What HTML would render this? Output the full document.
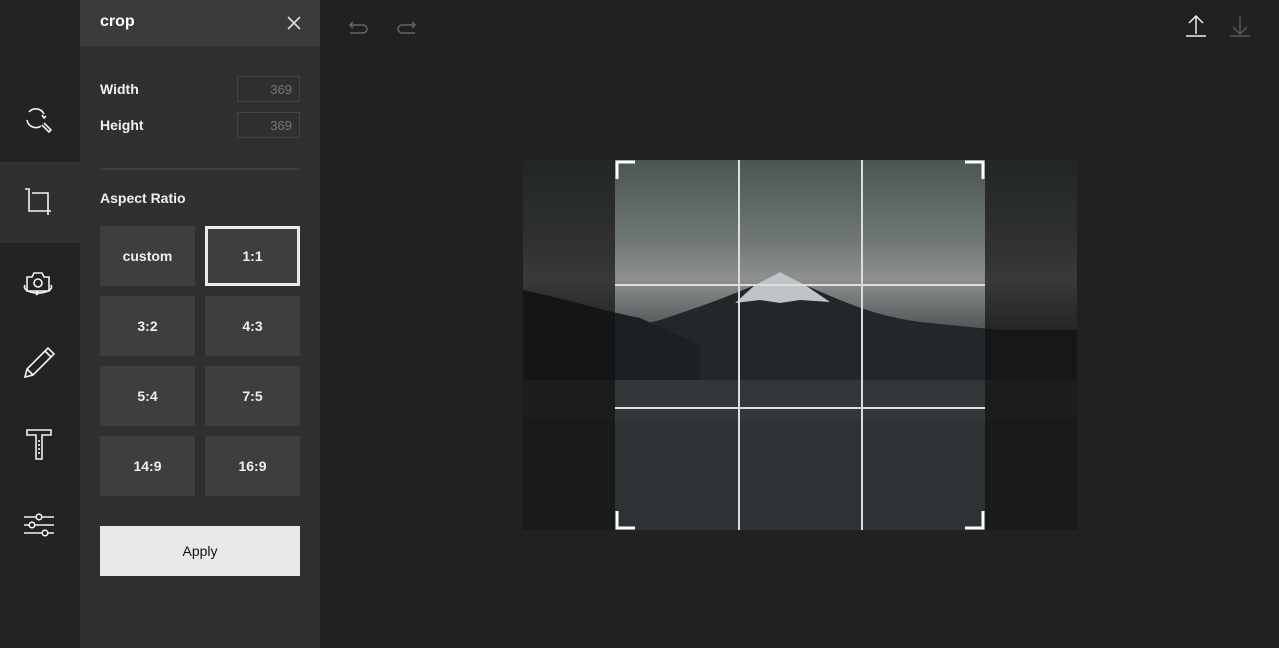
<!DOCTYPE html>
<html><head><style>
*{margin:0;padding:0;box-sizing:border-box}
body{width:1279px;height:648px;background:#212121;font-family:"Liberation Sans",sans-serif;position:relative;overflow:hidden;color:#eee}
.side{position:absolute;left:0;top:0;width:80px;height:648px;background:#232323}
.tab{position:absolute;left:0;width:80px;height:81px}
.panel{position:absolute;left:80px;top:0;width:240px;height:648px;background:#303030}
.head{height:46px;background:#3b3b3b;position:relative}
.head b{position:absolute;left:20px;top:13px;font-size:16px;color:#fff}
.lbl{position:absolute;left:20px;font-size:14px;font-weight:bold;color:#f0f0f0}
.inp{position:absolute;left:157px;width:63px;height:26px;border:1px solid #454545;font-size:13px;color:#777;text-align:right;padding:5px 7px 0 0}
.btn{position:absolute;width:95px;height:60px;background:#3e3e3e;font-size:14px;font-weight:bold;color:#eee;text-align:center;line-height:60px}
.sel{border:3px solid #eaeaea;line-height:54px}
</style></head><body>
<div class="side">
 <div class="tab" style="top:162px;background:#303030"></div>
 <svg width="80" height="648" style="position:absolute;left:0;top:0" fill="none" stroke="#f2f2f2" stroke-width="1.6">
  <path d="M29 112 a9 9 0 0 1 15 2 M46 116 l-2 2 -2-3 M27 120 a9 9 0 0 0 14 6"/>
  <path d="M42 125 l7 7 2-2 -7-7"/>
  <path d="M25 189 h4 v22 h22 M32 193 h16 v22"/>
  <path d="M27 277 h5 l2-4 h8 l2 4 h5 v14 h-22z"/><circle cx="38" cy="283" r="4"/><path d="M25 285 c-3 5 6 8 13 8 M38 293 c7 0 16-3 13-8 M36 291 l3 2-3 2"/>
  <path d="M25 377 l2-8 21-21 6 6-21 21z M27 369 l6 6 M45 351 l6 6"/>
  <path d="M39 440 v14" stroke-dasharray="2 2"/>
  <path d="M27 430 h24 v5 h-9 v24 h-6 v-24 h-9z"/>
  <path d="M24 517 h30 M24 525 h30 M24 533 h30"/>
  <circle cx="39" cy="517" r="2.8" fill="#232323"/><circle cx="32" cy="525" r="2.8" fill="#232323"/><circle cx="45" cy="533" r="2.8" fill="#232323"/>
 </svg>
</div>
<div class="panel">
 <div class="head"><b>crop</b>
  <svg width="14" height="14" style="position:absolute;left:207px;top:16px" stroke="#ddd" stroke-width="1.6"><path d="M1 1L13 13M13 1L1 13"/></svg></div>
 <div class="lbl" style="top:81px">Width</div><div class="inp" style="top:76px">369</div>
 <div class="lbl" style="top:117px">Height</div><div class="inp" style="top:112px">369</div>
 <div style="position:absolute;left:20px;top:168px;width:200px;height:2px;background:#3f3f3f"></div>
 <div class="lbl" style="top:190px">Aspect Ratio</div>
 <div class="btn" style="left:20px;top:226px">custom</div>
 <div class="btn sel" style="left:125px;top:226px">1:1</div>
 <div class="btn" style="left:20px;top:296px">3:2</div><div class="btn" style="left:125px;top:296px">4:3</div>
 <div class="btn" style="left:20px;top:366px">5:4</div><div class="btn" style="left:125px;top:366px">7:5</div>
 <div class="btn" style="left:20px;top:436px">14:9</div><div class="btn" style="left:125px;top:436px">16:9</div>
 <div style="position:absolute;left:20px;top:526px;width:200px;height:50px;background:#e9e9e9;color:#111;font-size:14px;text-align:center;line-height:50px">Apply</div>
</div>
<svg width="1279" height="648" style="position:absolute;left:0;top:0" fill="none" stroke-width="1.5">
 <path d="M353 22 l-3 3 3 3 M351 25 h12 a4 4 0 0 1 0 8 h-13" stroke="#666"/>
 <path d="M412 22 l3 3 -3 3 M414 25 h-12 a4 4 0 0 0 0 8 h13" stroke="#666"/>
 <path d="M1196 16 v18 M1189 23 l7-7 7 7 M1186 36 h20" stroke="#eee"/>
 <path d="M1240 16 v18 M1233 27 l7 7 7-7 M1230 36 h20" stroke="#555"/>
 <defs>
  <linearGradient id="sky" x1="0" y1="0" x2="0" y2="1">
   <stop offset="0" stop-color="#4a5554"/><stop offset="0.22" stop-color="#6f7876"/><stop offset="0.32" stop-color="#8e918e"/><stop offset="0.4" stop-color="#6a7070"/><stop offset="0.5" stop-color="#3a4243"/><stop offset="1" stop-color="#2c3133"/>
  </linearGradient>
 </defs>
 <rect x="523" y="160" width="554" height="370" fill="url(#sky)"/>
 <path d="M523 290 C570 300 600 315 640 325 L660 320 C690 310 720 300 755 285 L780 272 L805 285 C840 300 870 315 920 322 L1000 330 L1077 330 L1077 380 L523 380Z" fill="#22282a"/>
 <path d="M523 290 C570 300 600 310 640 318 L700 345 L700 380 L523 380Z" fill="#1c2022"/>
 <path d="M755 285 L780 272 L805 285 L830 302 L800 300 L780 303 L760 300 L735 303Z" fill="#bfc4c6"/>
 <path d="M523 380 H1077 V530 H523Z" fill="#2d3234"/>
 <rect x="523" y="380" width="554" height="40" fill="#363c3e" fill-opacity="0.6"/>
 <rect x="523" y="160" width="92" height="370" fill="#101010" fill-opacity="0.68"/>
 <rect x="985" y="160" width="92" height="370" fill="#101010" fill-opacity="0.68"/>
 <g stroke="#ddd" stroke-width="2">
  <path d="M739 160 V530 M862 160 V530 M615 285 H985 M615 408 H985"/>
 </g>
 <g stroke="#fff" stroke-width="3">
  <path d="M617 179 V162 H635 M965 162 H983 V179 M617 511 V528 H635 M965 528 H983 V511"/>
 </g>
</svg>
</body></html>
